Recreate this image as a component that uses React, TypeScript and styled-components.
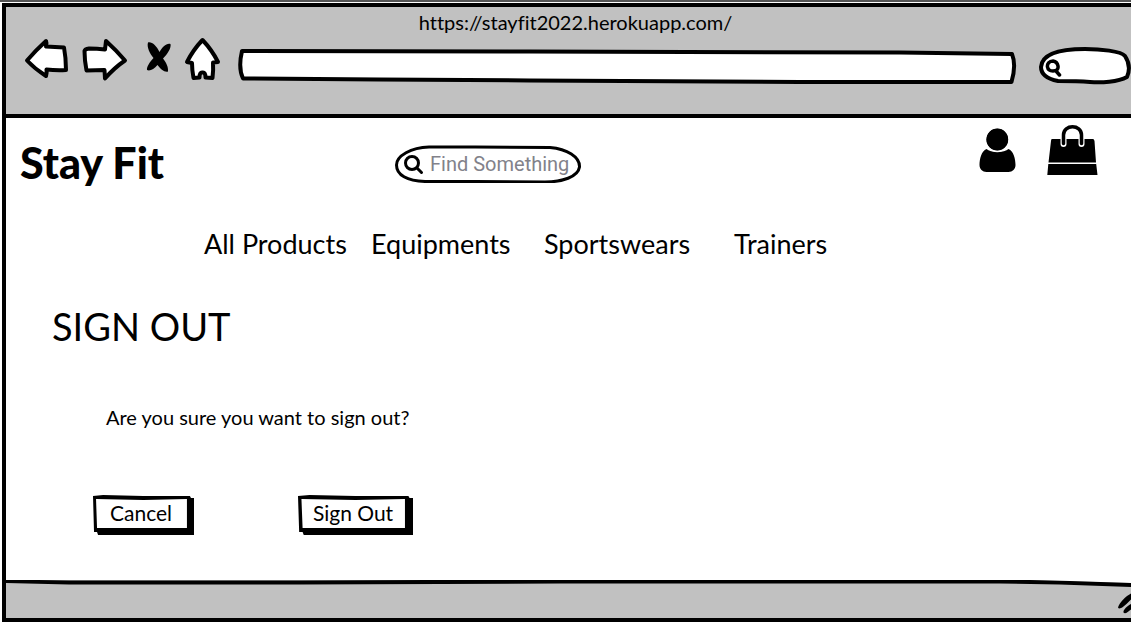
import React from "react";
import styled, { createGlobalStyle } from "styled-components";

const GlobalStyle = createGlobalStyle`
  *, *::before, *::after { box-sizing: border-box; }
  body {
    margin: 0;
    background: #fff;
    color: #000;
    font-family: Lato, "Liberation Sans", sans-serif;
    font-variant-ligatures: none;
    overflow-x: hidden;
  }
  h1, h2, p, ul { margin: 0; padding: 0; }
`;

const Page = styled.div`
  min-height: 100vh;
  display: flex;
  flex-direction: column;
  border-top: 2px solid #555;
  padding: 1px 0 5px 2px;
`;

const BrowserWindow = styled.div`
  flex: 1;
  display: flex;
  flex-direction: column;
  border: solid #000;
  border-width: 4px 0 4px 4px;
`;

const Chrome = styled.header`
  background: #c1c1c1;
  border-bottom: 4px solid #000;
  padding: 3px 0 29px 18px;
`;

const Address = styled.p`
  font-size: 20px;
  line-height: 24px;
  text-align: center;
  padding-right: 4px;
`;

const Toolbar = styled.div`
  display: flex;
  align-items: flex-end;
  height: 48px;
  margin-top: 3px;
`;

const ToolButton = styled.button<{ $gap: number }>`
  display: flex;
  padding: 0;
  margin-right: ${(p) => p.$gap}px;
  border: 0;
  background: none;
  cursor: pointer;
`;

const SketchField = styled.label<{ $width?: number; $gap?: number }>`
  position: relative;
  display: flex;
  align-items: center;
  height: 38px;
  margin-left: ${(p) => p.$gap ?? 0}px;
  flex: ${(p) => (p.$width ? `0 0 ${p.$width}px` : "1")};
  min-width: 0;
`;

const Outline = styled.svg<{ $stroke?: number }>`
  position: absolute;
  inset: 0;
  width: 100%;
  height: 100%;
  fill: #fff;
  stroke: #000;
  stroke-width: ${(p) => p.$stroke ?? 4};
  stroke-linejoin: round;
`;

const FieldIcon = styled.svg`
  position: relative;
  flex: none;
  margin-left: 6px;
  fill: none;
  stroke: #000;
  stroke-linecap: round;
`;

const FieldInput = styled.input`
  position: relative;
  flex: 1;
  min-width: 0;
  height: 28px;
  margin: 0 2px 0 5px;
  padding: 0;
  border: 0;
  outline: 0;
  background: none;
  font: 20px/28px Roboto, sans-serif;
  appearance: none;
  &::placeholder { color: #82828a; opacity: 1; }
  &::-webkit-search-cancel-button { display: none; }
`;

const Main = styled.main`
  flex: 1;
  padding: 7px 0 43px;
`;

const Masthead = styled.div`
  display: flex;
  align-items: center;
  height: 78px;
  padding: 0 33px 0 14px;
`;

const Brand = styled.h1`
  flex: 0 0 375px;
  padding-bottom: 2px;
  font-size: 43px;
  line-height: 52px;
  font-weight: 900;
`;

const Shortcuts = styled.div`
  display: flex;
  align-self: flex-start;
  gap: 31px;
  margin-left: auto;
`;

const IconLink = styled.a`
  display: flex;
  color: #000;
`;

const Menu = styled.ul`
  display: grid;
  grid-template-columns: 167px 173px 190px auto;
  margin: 25px 0 0 198px;
  list-style: none;
`;

const MenuLink = styled.a`
  color: #000;
  font-size: 27px;
  line-height: 32px;
  text-decoration: none;
  white-space: nowrap;
`;

const Heading = styled.h2`
  margin: 44px 0 0 46px;
  font-size: 38px;
  line-height: 44px;
  font-weight: 400;
`;

const Question = styled.p`
  margin: 57px 0 0 100px;
  font-size: 20px;
  line-height: 24px;
`;

const Actions = styled.div`
  display: flex;
  gap: 104px;
  margin: 66px 0 0 87px;
`;

const SketchButton = styled.button<{ $width: number }>`
  position: relative;
  width: ${(p) => p.$width}px;
  height: 41px;
  padding: 0 5px 6px 0;
  border: 0;
  background: none;
  color: #000;
  font: 21px/24px Lato, "Liberation Sans", sans-serif;
  cursor: pointer;
`;

const ButtonShape = styled.svg`
  position: absolute;
  inset: 0;
  width: 100%;
  height: 100%;
`;

const ButtonLabel = styled.span`
  position: relative;
`;

const StatusBar = styled.footer`
  position: relative;
  height: 38px;
  background: #c1c1c1;
`;

const StatusEdge = styled.svg`
  position: absolute;
  top: 0;
  left: 0;
  width: 100%;
  height: 8px;
`;

const Grip = styled.svg`
  position: absolute;
  right: 0;
  bottom: 4px;
`;

const drawn = {
  fill: "#fff",
  stroke: "#000",
  strokeWidth: 4,
  strokeLinejoin: "round" as const,
  strokeLinecap: "round" as const,
};

function ActionButton({ width, children }: { width: number; children: string }) {
  return (
    <SketchButton type="button" $width={width}>
      <ButtonShape viewBox="0 0 100 41" preserveAspectRatio="none" aria-hidden="true">
        <path d="M0 1L10 0L50 1L96 1L97 3L100 3V40L5 40L4 37L1 37Z" fill="#000" />
        <path d="M3 4L50 5L93 4L93 33L50 33L4 33Z" fill="#fff" />
      </ButtonShape>
      <ButtonLabel>{children}</ButtonLabel>
    </SketchButton>
  );
}

export default function App() {
  return (
    <>
      <GlobalStyle />
      <Page>
        <BrowserWindow>
          <Chrome>
            <Address>https://stayfit2022.herokuapp.com/</Address>
            <Toolbar>
              <ToolButton $gap={12} aria-label="Back">
                <svg width="46" height="48" viewBox="24 37 46 48" {...drawn}>
                  <path d="M27 60.500Q36 50 46 41Q47 43 46 46.500Q55 47 64 47.500Q66 58 66 70Q56 70.500 46.500 69.500Q47 73 46 76Q35 69 27 60.500Z" />
                </svg>
              </ToolButton>
              <ToolButton $gap={16} aria-label="Forward">
                <svg width="47" height="48" viewBox="82 37 47 48" {...drawn}>
                  <path d="M84.500 51Q85 49 89 48.500Q97 48.500 105 49.500L106 41Q116 50 125 60.500Q114 68 105 78.500L104.500 70Q95 70 86.500 70.500Q84.500 60 84.500 51Z" />
                </svg>
              </ToolButton>
              <ToolButton $gap={11} aria-label="Stop">
                <svg width="28" height="48" viewBox="145 37 28 48">
                  <path d="M148 42.500C152 41.500 156.500 46 159.500 52C162 47 167 42.500 170.500 44C171.500 48 167.500 54 163 58.500C166 62 168.500 67 168 71.500C164.500 72.500 160.500 69 157.500 65C154 69 150 71.500 147 70C146.500 67 150 61.500 153.500 58C150 54 146.500 47 148 42.500Z" />
                </svg>
              </ToolButton>
              <ToolButton $gap={16} aria-label="Home">
                <svg width="38" height="48" viewBox="184 37 38 48" {...drawn}>
                  <path d="M202.500 40Q193 50 187 62L192 63Q192 70 193.500 78L199.500 77.500Q199.500 72 202.500 72.500Q205.500 72 205.500 77.500L212.500 78Q213.500 70 213 62.500L218 62Q212 50 202.500 40Z" />
                </svg>
              </ToolButton>
              <SketchField>
                <Outline viewBox="239 47 778 38" preserveAspectRatio="none" aria-hidden="true">
                  <path d="M243 51L530 51.500L900 52.500L1012 54Q1016.500 65 1011.500 82L800 82L530 80.500L380 79.500L244 78.500Q239 68 243 51Z" />
                </Outline>
                <FieldInput type="text" aria-label="Web address" />
              </SketchField>
              <SketchField $width={93} $gap={21}>
                <Outline viewBox="1038 47 93 38" preserveAspectRatio="none" aria-hidden="true">
                  <path d="M1041 67C1042 53 1062 49 1085 49C1100 49 1121 51 1125 56C1129 62 1130 70 1127 77C1118 82 1101 83 1090 82C1078 81 1067 81 1058 81C1048 79 1041 75 1041 67Z" />
                </Outline>
                <FieldIcon width="20" height="22" viewBox="1044 55 20 22" strokeWidth="3.500" aria-hidden="true">
                  <path d="M1053 61C1049 61 1047 64 1047.500 67C1048 70 1050 71 1053 71C1057 71 1058.500 69 1058 66C1057.500 63 1056 61.500 1053 61ZM1056 71L1059.500 75" />
                </FieldIcon>
                <FieldInput type="search" aria-label="Web search" />
              </SketchField>
            </Toolbar>
          </Chrome>

          <Main>
            <Masthead>
              <Brand>Stay Fit</Brand>
              <SketchField $width={187}>
                <Outline $stroke={3} viewBox="395 145 187 38" preserveAspectRatio="none" aria-hidden="true">
                  <path d="M396.500 165C396.500 156 411 147.500 429 147L475 147L550 147.500C567 149 580 157 579.500 167C578 177 562 182 545 182L475 181.500L425 181.500C407 181 396.500 175 396.500 165Z" />
                </Outline>
                <FieldIcon width="24" height="24" viewBox="400 152 24 24" strokeWidth="3" aria-hidden="true">
                  <circle cx="411" cy="163" r="6.500" />
                  <path d="M416 168L420.500 172.500" />
                </FieldIcon>
                <FieldInput type="search" placeholder="Find Something" aria-label="Find something" />
              </SketchField>
              <Shortcuts>
                <IconLink href="#account" aria-label="Account">
                  <svg width="37" height="52" viewBox="979.500 125 37 52">
                    <path d="M987 149C991 153 1005 153 1009 149C1014 151 1016 159 1016 165C1016 169 1013 172 1009 172H987C983 172 980 169 980 165C980 159 982 151 987 149Z" />
                    <circle cx="997.800" cy="139.500" r="11.700" fill="#000" stroke="#fff" strokeWidth="2" />
                    <circle cx="997.800" cy="139.500" r="10.900" />
                  </svg>
                </IconLink>
                <IconLink href="#bag" aria-label="Shopping bag">
                  <svg width="51" height="52" viewBox="1047 125 51 52">
                    <path d="M1052 139H1093Q1094 139 1094.500 141L1096 162.500H1048.500L1051 141Q1051 139 1052 139ZM1048.300 164H1096.200L1097.500 175H1047.300Z" />
                    <path d="M1063.500 144V135C1063.500 124 1081.500 124 1081.500 135V144" fill="none" stroke="#fff" strokeWidth="6" strokeLinecap="round" />
                    <path d="M1063.500 143.500V135C1063.500 124 1081.500 124 1081.500 135V143.500" fill="none" stroke="#000" strokeWidth="3.500" strokeLinecap="round" />
                  </svg>
                </IconLink>
              </Shortcuts>
            </Masthead>

            <nav aria-label="Shop">
              <Menu>
                <li><MenuLink href="#all">All Products</MenuLink></li>
                <li><MenuLink href="#equipments">Equipments</MenuLink></li>
                <li><MenuLink href="#sportswears">Sportswears</MenuLink></li>
                <li><MenuLink href="#trainers">Trainers</MenuLink></li>
              </Menu>
            </nav>

            <Heading>SIGN OUT</Heading>
            <Question>Are you sure you want to sign out?</Question>
            <Actions>
              <ActionButton width={101}>Cancel</ActionButton>
              <ActionButton width={115}>Sign Out</ActionButton>
            </Actions>
          </Main>

          <StatusBar>
            <StatusEdge viewBox="7 579 1124 8" preserveAspectRatio="none" aria-hidden="true">
              <path d="M7 579H1131V582L1060 580L1010 579Z" fill="#fff" />
              <path d="M7 578.500L70 579.500H300L560 578.500H1010L1070 580L1131 582V586L1060 583.500L1000 582.500H560L300 583.500H70L7 582Z" />
            </StatusEdge>
            <Grip width="14" height="24" viewBox="1117 590 14 24" aria-hidden="true">
              <path d="M1131 593.500C1126 596 1119 603 1118 607.500C1119 609.500 1122 609 1131 599.500ZM1131 604C1127 606 1123 610 1123.500 612.500C1125 614.500 1128 612 1131 609.500Z" />
            </Grip>
          </StatusBar>
        </BrowserWindow>
      </Page>
    </>
  );
}
